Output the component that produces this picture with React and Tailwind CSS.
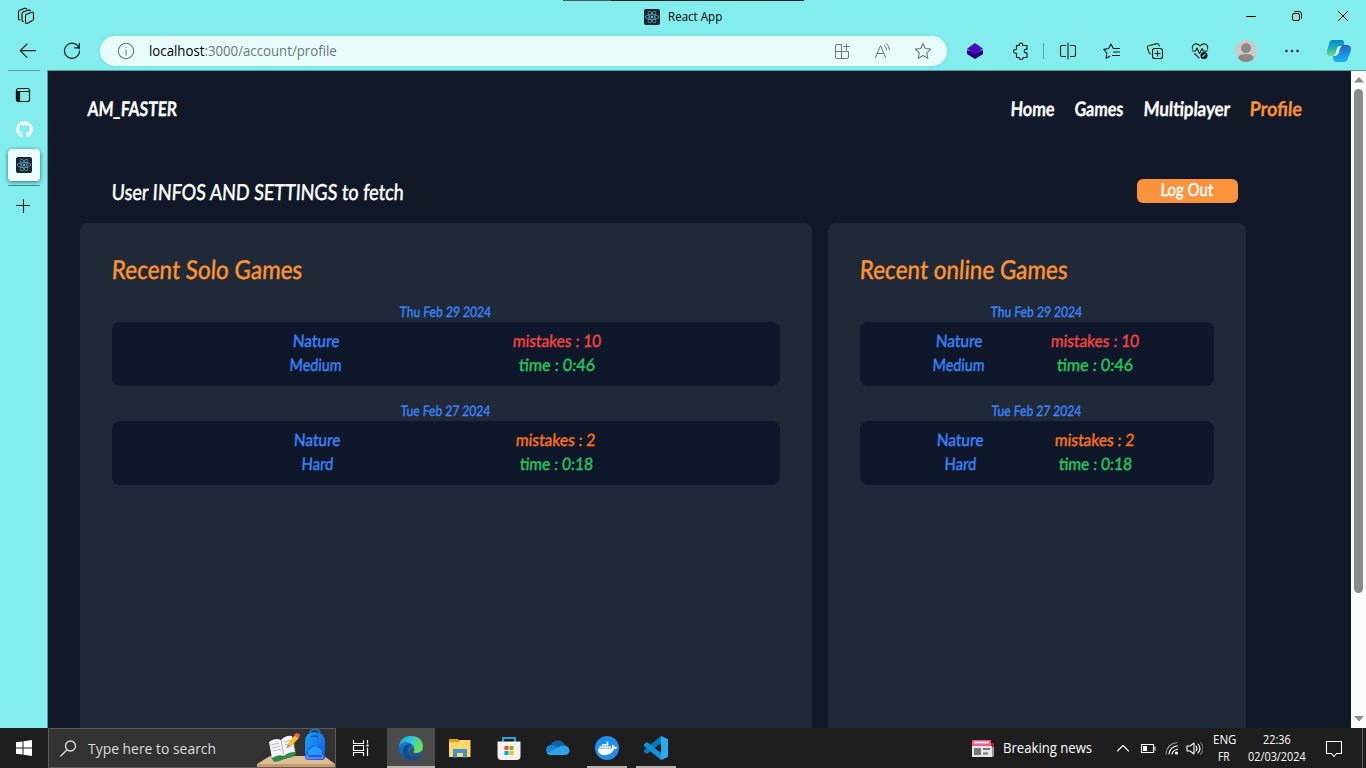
import React, { useLayoutEffect, useRef, useState } from 'react';
import { FaGithub, FaDocker, FaReact } from 'react-icons/fa';

/* Text that condenses or widens itself to a given width. */
function Fit({ w, className = '', hand = false, children }) {
  const ref = useRef(null);
  const [scale, setScale] = useState(1);
  useLayoutEffect(() => {
    if (ref.current && ref.current.offsetWidth) setScale(w / ref.current.offsetWidth);
  }, [w]);
  return (
    <span className={`block whitespace-nowrap ${className}`} style={{ width: w }}>
      <span
        ref={ref}
        className={hand ? 'inline-block origin-bottom-left [-webkit-text-stroke:0.35px_currentColor]' : 'inline-block origin-bottom-left'}
        style={{ transform: hand ? `translate(-1px, -1px) scaleX(${scale}) skewX(-4deg)` : `scaleX(${scale})` }}
      >
        {children}
      </span>
    </span>
  );
}

const HAND = "font-['Lato','Open_Sans',sans-serif]";

function Icon({ size = 20, box = '0 0 20 20', className = '', sw = 1.1, children }) {
  return (
    <svg width={size} height={size} viewBox={box} fill="none" stroke="currentColor" strokeWidth={sw} strokeLinecap="round" strokeLinejoin="round" className={`block shrink-0 ${className}`}>
      {children}
    </svg>
  );
}

function Slot({ className = '', children }) {
  return <div className={`flex shrink-0 items-center justify-center ${className}`}>{children}</div>;
}

function ReactTile() {
  return (
    <div className="flex size-4 shrink-0 items-center justify-center rounded-xs bg-[#20232a]">
      <FaReact size={14} color="#5cb9d6" />
    </div>
  );
}

function TitleBar() {
  return (
    <div className="flex h-8 items-center">
      <div className="w-[563px] self-stretch pt-1.5 pl-4">
        <Icon>
          <path d="M10.500 8.200 16 6.300Q17.500 6 17.500 7.400V13q0 1.200-1.100 1.600L11.500 17.300Q9.500 18 9.500 16.200V9.700Q9.500 8.600 10.500 8.200Z" />
          <path d="M7.300 15.500Q6 15.500 6 14V7.700Q6 6.500 7.100 6L12.500 4.100q1.200-.3 1.800.7" />
          <path d="M4 14Q2.500 14 2.500 12.500V6Q2.500 4.700 3.600 4.200L8.800 2.300q1.200-.3 1.800.6" />
        </Icon>
      </div>
      <div className="flex w-[241px] flex-col self-stretch">
        <div className="flex h-px"><div className="w-12 bg-[#565656]" /><div className="grow bg-[#202020]" /></div>
        <div className="flex h-[31px] items-center pl-[81px]">
          <ReactTile />
          <Fit w={54} className="ml-2 text-[12px] leading-4 text-black">React App</Fit>
        </div>
      </div>
      <div className="ml-auto flex text-black">
        <Slot className="w-[46px]"><Icon size={10} box="0 0 10 10" sw="1"><path d="M0 5.500h10" /></Icon></Slot>
        <Slot className="w-[46px]"><Icon size={10} box="0 0 10 10" sw="1"><rect x=".5" y="2.500" width="7" height="7" rx="1.500" /><path d="M2.500 .500H7Q9.500 .500 9.500 3v4.500" /></Icon></Slot>
        <Slot className="w-[46px]"><Icon size={10} box="0 0 10 10" sw="1"><path d="M0 0 10 10M10 0 0 10" /></Icon></Slot>
      </div>
    </div>
  );
}

function Toolbar() {
  return (
    <div className="flex h-[38px] items-center text-[#101c1c]">
      <Slot className="w-14"><Icon sw="1.2"><path d="M17.500 9.700H2.500M9 3 2.300 9.700 9 16.400" /></Icon></Slot>
      <Slot className="w-8"><Icon sw="1.2"><path d="M17.300 8A7.500 7.500 0 1 0 17.500 10M17.300 2.300V6.800H12.600" /></Icon></Slot>
      <div className="ml-3 flex h-[30px] w-[847px] items-center rounded-full bg-[#e8fcfc] pl-4 text-[#6c7777] shadow-[0_0_4px_rgba(0,80,90,0.12)]">
        <Icon><circle cx="10" cy="10" r="7.700" /><path d="M10 9v5M10 6.200v.200" /></Icon>
        <Fit w={188} className="ml-[13px] text-[14px] leading-5"><span className="text-black">localhost</span>:3000/account/profile</Fit>
        <div className="ml-auto flex pr-[5px]">
          <Slot className="w-10"><Icon size={18} box="0 0 18 18" sw="1"><path d="M8.500 2.500H4Q2.500 2.500 2.500 4v11.000Q2.500 16.500 4 16.500H14q1.500 0 1.500-1.500V9.500H2.500M8.500 2.500v14M13.500 2v6M10.500 4.500h6" /></Icon></Slot>
          <Slot className="w-10"><Icon size={18} box="0 0 18 18" sw="1"><path d="M2.500 15.500 7.500 3.500 12.500 15.500M4 11.500h7M11.500 3.500q2 2 2 4.500M13.500 1.500q3 2.500 3 6.500" /></Icon></Slot>
          <Slot className="w-10 pl-px"><Icon size={20}><path d="m10 2.500 2.300 5 5.400.600-4 3.700 1.100 5.400-4.800-2.700-4.800 2.700 1.100-5.400-4-3.700 5.400-.600Z" /></Icon></Slot>
        </div>
      </div>
      <Slot className="w-14">
        <svg width="18" height="18" viewBox="0 0 18 18"><path d="m1 8 8 3 8-3v4l-8 5-8-5Z" fill="#26007a" /><path d="m1 6.800 8-5.800 8 5.800-8 5.700Z" fill="#4a0abf" /></svg>
      </Slot>
      <Slot className="w-8 pl-1"><Icon size={18} box="0 0 18 18"><path d="M4.500 3.500H7.300Q7 1 9 1T10.700 3.500H15V7.200Q12.200 6.800 12.200 9T15 10.800v4.700H11Q11.200 17.500 9.200 17.500T7.300 15.500H4.500V11.200Q1.500 11.500 1.500 9.300T4.500 7.300Z" /></Icon></Slot>
      <Slot className="w-4"><div className="h-4 w-px bg-[#58a6a9]" /></Slot>
      <Slot className="w-8 pl-px"><Icon size={18} box="0 0 18 18" sw="1.1"><path d="M6.500 3.500H3Q1.500 3.500 1.500 5v8Q1.500 14.500 3 14.500h3.500M11.500 3.500H15q1.500 0 1.500 1.500v8q0 1.500-1.500 1.500h-3.500M9 1v16" /></Icon></Slot>
      <Slot className="ml-1.5 w-11 pl-0.5"><Icon size={18} box="0 0 18 18"><path d="m6.800 14.200-3.700 2 .7-5.200L.800 7.400l4.800-.900L8 2l2.300 4.500H16.500M10.500 10H16.500M9.500 13.500h7" /></Icon></Slot>
      <Slot className="w-11"><Icon size={18} box="0 0 18 18"><rect x="6.500" y="6.500" width="10" height="10" rx="2.300" /><path d="M11.500 9v5M9 11.500h5M13.300 4 12.800 2.700Q12.300 1.300 11 1.600L2.700 3.800Q1 4.300 1.500 6L3.200 11.000q.4 1 1.500 1" /></Icon></Slot>
      <Slot className="w-11 pl-0.5"><Icon size={18} box="0 0 18 18"><path d="M1.500 7Q.800 3 4 2q3-.500 5 2 2-2.500 5-2 3.300 1 2.500 5M1.500 9h3L6 6l2.500 5.500L11 6.500l1.200 2.500h4M3.500 11.500 8 16" /><circle cx="13" cy="13.500" r="3" fill="currentColor" /><path d="m11.800 14.500 2.200-2.200" stroke="#83edee" /></Icon></Slot>
      <Slot className="w-12 pl-0.5"><svg width="22" height="22" viewBox="0 0 22 22"><circle cx="11" cy="11" r="11" fill="#cbcbc9" /><circle cx="11" cy="8.200" r="5" fill="#8d8986" /><path d="M3 18Q4 14 11 14t8 4Q16 22 11 22T3 18" fill="#8d8986" /></svg></Slot>
      <Slot className="w-11 pl-0.5"><Icon size={16} box="0 0 16 16" sw="2.500"><path d="M2.500 8h.01M8 8h.01M13.500 8h.01" /></Icon></Slot>
      <Slot className="w-[50px]">
        <svg width="25" height="24" viewBox="0 0 25 24">
          <defs>
            <linearGradient id="ca" x1="0" y1="0" x2="0" y2="1"><stop stopColor="#0d83c9" /><stop offset=".55" stopColor="#1bb8bc" /><stop offset="1" stopColor="#78dd70" /></linearGradient>
            <linearGradient id="cb" x1="0" y1="0" x2="0" y2="1"><stop stopColor="#2463cb" /><stop offset="1" stopColor="#16b7f4" /></linearGradient>
          </defs>
          <path d="M6 1H16q2 0 2 3l1 3h-3q-3 0-4 4l-1 3q-1 3-3 3H4Q0 17 1 12L3 5Q4 1 6 1" fill="url(#ca)" />
          <path d="M17 6h4q4 0 4 5l-3 8q-1 4-4 4H10q-3 0-3-6h1q4 0 5-4l1-4q1-3 3-3" fill="url(#cb)" />
          <path d="M13 7h3q-2 1-3 5-1 4-4 5H7q3-1 3-5 1-4 3-5" fill="#d7f8e9" />
        </svg>
      </Slot>
    </div>
  );
}

function Sidebar() {
  return (
    <div className="flex w-[47px] shrink-0 flex-col items-center pl-px text-[#101c1c]">
      <div className="h-px w-8 bg-[#58a6a9]" />
      <div className="mt-4 size-4 -translate-x-px"><Icon size={16} box="0 0 16 16" sw="1.200"><rect x="1.500" y="1.500" width="13" height="13" rx="2" /><path d="M1.500 4.500h13" /><path d="M1.500 4.500h3v10H3.500Q1.500 14.500 1.500 12.500Z" fill="currentColor" /></Icon></div>
      <FaGithub size={17} color="#fff" className="mt-[18px]" />
      <div className="mt-[11px] flex size-8 shrink-0 items-center justify-center rounded bg-[#edfdfd] shadow-[0_1px_4px_rgba(0,40,45,0.65)]"><ReactTile /></div>
      <div className="mt-1 h-px w-8 shrink-0 bg-[#3f8e92]" />
      <Icon size={14} box="0 0 14 14" className="mt-[13px] -translate-x-px"><path d="M7.500 .500v13M.500 6.500h13.500" /></Icon>
    </div>
  );
}

function Game({ date, dw, level, lw, mistakes, mw, mColor, time, tw, cols, nw = 47 }) {
  return (
    <div className="mb-[15px]">
      <div className="flex h-5 justify-center text-[#3b82f6]"><Fit hand w={dw} className="translate-y-px text-[14.500px] leading-5 font-medium">{date}</Fit></div>
      <div className={`grid h-16 rounded-lg bg-[#0f172a] pt-2 text-[17px] leading-6 font-medium ${cols}`}>
        <div className="col-start-2 flex flex-col items-center text-[#3b82f6]">
          <Fit hand w={nw}>Nature</Fit>
          <Fit hand w={lw}>{level}</Fit>
        </div>
        <div className="col-start-4 flex flex-col items-center">
          <Fit hand w={mw} className={mColor}>{mistakes}</Fit>
          <Fit hand w={tw} className="text-[#22c55e]">{time}</Fit>
        </div>
      </div>
    </div>
  );
}

function Games({ title, titleW, cols1, cols2, className }) {
  return (
    <section className={`h-[520px] rounded-lg bg-[#1f2937] px-8 pt-8 ${className}`}>
      <h2 className="mb-[17px] h-[30px] text-[#fb9430]"><Fit hand w={titleW} className="text-[26px] leading-[30px] font-medium">{title}</Fit></h2>
      <Game date="Thu Feb 29 2024" dw={92} level="Medium" lw={52} mistakes="mistakes : 10" mw={88} mColor="text-[#ef4444]" time="time : 0:46" tw={76} cols={cols1} />
      <Game date="Tue Feb 27 2024" dw={90} level="Hard" lw={32} mistakes="mistakes : 2" mw={80} mColor="text-[#f97316]" time="time : 0:18" tw={73} cols={cols2} />
    </section>
  );
}

function Page() {
  return (
    <main className={`h-[657px] grow overflow-hidden bg-[#111827] text-white ${HAND}`}>
      <nav className="flex h-[76px] items-center justify-between pr-[49px] pl-10 text-[20px] leading-6 font-bold">
        <Fit hand w={89}>AM_FASTER</Fit>
        <div className="flex gap-5">
          <Fit hand w={44}>Home</Fit>
          <Fit hand w={49}>Games</Fit>
          <Fit hand w={86}>Multiplayer</Fit>
          <Fit hand w={52} className="text-[#fb923c]">Profile</Fit>
        </div>
      </nav>
      <header className="flex h-[76px] items-start justify-between pt-8 pr-[113px] pl-16">
        <Fit hand w={292} className="text-[22px] leading-7 font-medium">User INFOS AND SETTINGS to fetch</Fit>
        <button className="flex h-6 w-[101px] items-center justify-center rounded-md bg-[#fb923c] pb-0.5"><Fit hand w={53} className="text-[18px] leading-5 font-medium">Log Out</Fit></button>
      </header>
      <div className="flex gap-4 pl-8">
        <Games title="Recent Solo Games" titleW={191} className="w-[732px]" cols1="grid-cols-[178px_52px_171px_88px]" cols2="grid-cols-[182px_47px_175px_80px]" />
        <Games title="Recent online Games" titleW={208} className="w-[418px]" cols1="grid-cols-[73px_52px_66px_88px]" cols2="grid-cols-[77px_47px_71px_80px]" />
      </div>
    </main>
  );
}

function Scrollbar() {
  return (
    <div className="flex w-[15px] shrink-0 flex-col items-center bg-[#fcfcfc]">
      <svg width="10" height="18" viewBox="0 0 10 18"><path d="M0 11.500 5 6l5 5.500Z" fill="#8b8b8b" /></svg>
      <div className="h-[504px] w-[9px] rounded-full bg-[#8b8b8b]" />
      <svg width="10" height="18" viewBox="0 0 10 18" className="mt-auto"><path d="M0 6h10L5 11.500Z" fill="#8b8b8b" /></svg>
    </div>
  );
}

function SearchArt() {
  return (
    <svg width="78" height="38" viewBox="0 0 78 38" className="mt-auto ml-auto block">
      <defs><linearGradient id="bag" x1="0" y1="0" x2="1" y2="1"><stop stopColor="#20a1ff" /><stop offset="1" stopColor="#1159dc" /></linearGradient></defs>
      <path d="M0 38v-3L13 27h54l11 8v3Z" fill="#dfbd97" /><path d="M0 35h78v3H0Z" fill="#c99b6a" />
      <path d="m13 14 24-6 2 17q-2 3-8 4l-12 4q-3 0-4-3Z" fill="#2f8a4a" />
      <path d="M12 13q6-5 12-2 5-5 11-4l3 16q-7 0-11 4-6-2-12 2Z" fill="#f6f4fa" /><path d="m24 11 3 16M14 16l8-2M15 19l8-2M16 22l8-2M27 13l7-2M28 16l7-2M29 19l7-2" stroke="#bbb7c9" strokeWidth="1" />
      <path d="m30 18 2-5 6-7 4 3-8 8Z" fill="#f9b934" /><path d="m37 6 2-2q4 0 4 3l-2 2Z" fill="#ef5a4d" /><path d="m30 18 1-2 1 1Z" fill="#503828" />
      <path d="M53 4q0-3.500 5-3.500T63 4" stroke="#167bd5" strokeWidth="1.500" fill="none" />
      <path d="M48 13Q48 3 58 3t10 10v15q0 3-3 3H51q-3 0-3-3Z" fill="url(#bag)" /><path d="M54 8q4-2 8 0" stroke="#075ab1" strokeWidth="1.300" fill="none" />
      <path d="M50 29v-6q1-6 8-6t8 6v6Z" fill="#1265df" /><path d="M51 22q7-9 14 0v4H51Z" fill="#259cf8" /><path d="M50.500 26v3h15v-3" stroke="#c889f3" strokeWidth="1.200" fill="none" />
    </svg>
  );
}

function TaskApp({ active, running, children }) {
  return (
    <div className={`flex h-10 w-12 shrink-0 flex-col items-center ${active ? 'bg-[#4b4b4b]' : ''}`}>
      <div className="flex h-[38px] items-center pt-0.5">{children}</div>
      {active && <div className="h-0.5 w-12 bg-[#b8b4ac]" />}
      {running && <div className="h-0.5 w-10 bg-[#b8b4ac]" />}
    </div>
  );
}

function Taskbar() {
  return (
    <footer className="flex h-10 overflow-hidden bg-[#1e1e1e] text-white">
      <Slot className="w-12"><svg width="16" height="16" viewBox="0 0 16 16" fill="#fff"><path d="M0 2.300 6.500 1.400V7.500H0ZM7.500 1.200 16 0v7.500H7.500ZM0 8.500h6.500v6.100L0 13.700ZM7.500 8.500H16V16l-8.500-1.200Z" /></svg></Slot>
      <div className="flex w-72 items-center border border-[#5b5b5b] bg-[#323232] pl-[11px] text-[#dedede]">
        <Icon size={17} box="0 0 17 17" sw="1.300"><circle cx="10.500" cy="6" r="5" /><path d="M7 9.700 .800 16" /></Icon>
        <Fit w={128} className="ml-[11px] text-[15px] leading-5">Type here to search</Fit>
        <SearchArt />
      </div>
      <Slot className="w-12"><Icon size={18} box="0 0 18 18" sw="1.200" className="translate-x-px"><path d="M1.500 1.500V4.500H11.500V1.500M1.500 16.500v-3H11.500v3M1.500 6.500h10v5H1.500ZM15.500 1.500v2.500M15.500 9v7.500M15 6h1v1h-1Z" /></Icon></Slot>
      <div className="ml-[3px] flex gap-px">
        <TaskApp active>
          <svg width="24" height="24" viewBox="0 0 24 24">
            <defs>
              <linearGradient id="ea" x1="0" y1="0" x2="1" y2=".4"><stop stopColor="#159ed9" /><stop offset=".5" stopColor="#33c6dc" /><stop offset="1" stopColor="#70df52" /></linearGradient>
              <linearGradient id="eb" x1="0" y1="0" x2="0" y2="1"><stop stopColor="#168bd6" /><stop offset="1" stopColor="#0d56aa" /></linearGradient>
            </defs>
            <circle cx="12" cy="12" r="12" fill="url(#eb)" />
            <path d="M0 11Q1 0 12 0q11 0 12 10 0 7-7 7-4 0-3-3 2-2 0-5Q9 4 3 7 1 8 0 11" fill="url(#ea)" />
            <path d="M13 9Q8 11 9 16q1 5 7 5 4 0 6-2-3 5-9 5-9-1-9-8 0-7 6-8 2 0 3 1" fill="#104a91" />
            <path d="M15 12q1 3-1 4 1 4 9 1-2 3-6 3-6 0-6-5 0-3 4-3" fill="#4b4b4b" />
          </svg>
        </TaskApp>
        <TaskApp>
          <svg width="22" height="19" viewBox="0 0 22 19"><path d="M0 0h9l2 2v4H0Z" fill="#e4a010" /><path d="M0 3h9l2-2h10.500v17H0Z" fill="#ffd867" /><path d="M4 10h14v8.500h-4V14H8v4.500H4Z" fill="#3c93d4" /></svg>
        </TaskApp>
        <TaskApp>
          <svg width="24" height="24" viewBox="0 0 24 24"><path d="M6 6V2h12v4" fill="none" stroke="#22a8e0" strokeWidth="2" /><path d="M.500 5.500h23V20q0 4-4 4h-15q-4 0-4-4Z" fill="#f2f2f2" /><path d="M7.500 10h4v4h-4Z" fill="#f25022" /><path d="M12.500 10h4v4h-4Z" fill="#7fba00" /><path d="M7.500 15h4v4h-4Z" fill="#00a4ef" /><path d="M12.500 15h4v4h-4Z" fill="#ffb900" /></svg>
        </TaskApp>
        <TaskApp>
          <svg width="24" height="16" viewBox="0 0 24 16"><path d="M4 8Q5 1 11 .500q6-.500 8 5.500L12 13Z" fill="#0c64ae" /><path d="M0 10q0-5 6-5 3 0 5 2l7 5-6 3H5q-5 0-5-5" fill="#1b83cf" /><path d="M15 6q7-2 8.500 4Q24 15 18 15H5q-3 0-4-2Z" fill="#2ba5e7" /></svg>
        </TaskApp>
        <TaskApp running><div className="flex size-6 items-center justify-center rounded-full bg-[#208fe9]"><FaDocker size={19} color="#fff" /></div></TaskApp>
        <TaskApp running>
          <svg width="24" height="24" viewBox="0 0 24 24"><path d="m17 0 7 3v18l-7 3Z" fill="#2baaf0" /><path d="M17 0v7L3 18 0 16v-2Z" fill="#0879bd" /><path d="M17 24v-7L3 6 0 8v2Z" fill="#168fd5" /></svg>
        </TaskApp>
      </div>
      <div className="ml-auto flex items-center">
        <svg width="22" height="18" viewBox="0 0 22 18"><path d="M19 4h3v14h-3Z" fill="#a92d16" /><path d="M0 2Q0 1 1 1h17q1 0 1 1v5H0Z" fill="#f55b91" /><path d="M2 3.500h15" stroke="#fff" strokeWidth="1.700" /><path d="M0 7h20v11H0Z" fill="#e7e7e7" /><path d="M20 8h2v9l-2 1Z" fill="#999" /><path d="M2 9h7v7H2Z" fill="#777" /><path d="M11 10h7M11 14.500h5" stroke="#777" strokeWidth="2" /></svg>
        <Fit w={89} className="ml-[9px] text-[14px] leading-5">Breaking news</Fit>
        <Slot className="ml-[18px] w-[26px]"><Icon size={12} box="0 0 12 12"><path d="m.500 9 5.500-5.500L11.500 9" /></Icon></Slot>
        <Slot className="w-[23px]"><Icon size={16} box="0 0 16 16"><rect x="1.500" y="4.500" width="12" height="8" /><path d="M15 7v3" /><path d="M3.500 6.500h3v4h-3Z" fill="currentColor" /></Icon></Slot>
        <Slot className="w-[26px]"><Icon size={14} box="0 0 14 14"><path d="M1 13Q2 3 12 1.500" stroke="#999" /><path d="M4 13Q5 6 12.500 4.800M7 13Q8 9 12.500 8.200" /><circle cx="11.500" cy="12" r="1" fill="currentColor" /></Icon></Slot>
        <Slot className="w-[19px]"><Icon size={17} box="0 0 17 17"><path d="M1 6h3l4-3v11l-4-3H1ZM10 6q2 2.500 0 5M12 4q4 4.500 0 9" /><path d="M14.500 2.500q5 6 0 12" stroke="#777" /></Icon></Slot>
        <div className="ml-2 flex w-[25px] flex-col items-center pr-px text-[12px] leading-[17px]"><Fit w={23}>ENG</Fit><Fit w={12}>FR</Fit></div>
        <div className="ml-[11px] flex w-[60px] flex-col items-center pr-0.5 text-[12px] leading-[17px]"><Fit w={28}>22:36</Fit><Fit w={58}>02/03/2024</Fit></div>
        <Slot className="ml-[9px] w-8"><Icon size={18} box="0 0 18 18" className="translate-x-px translate-y-px"><path d="M1.500 1.500h15v12h-5l-2.500 3-2.500-3h-5Z" /></Icon></Slot>
        <div className="ml-[13px] h-10 w-px bg-[#696969]" /><div className="w-[3px]" />
      </div>
    </footer>
  );
}

export default function App() {
  return (
    <div className="h-[768px] w-[1366px] overflow-hidden bg-[#83edee] font-['Open_Sans','Noto_Sans',sans-serif]">
      <TitleBar />
      <Toolbar />
      <div className="flex h-[658px]">
        <Sidebar />
        <div className="flex h-[658px] min-w-0 grow border-t border-l border-[#57989d]">
          <Page />
          <Scrollbar />
        </div>
      </div>
      <Taskbar />
    </div>
  );
}
